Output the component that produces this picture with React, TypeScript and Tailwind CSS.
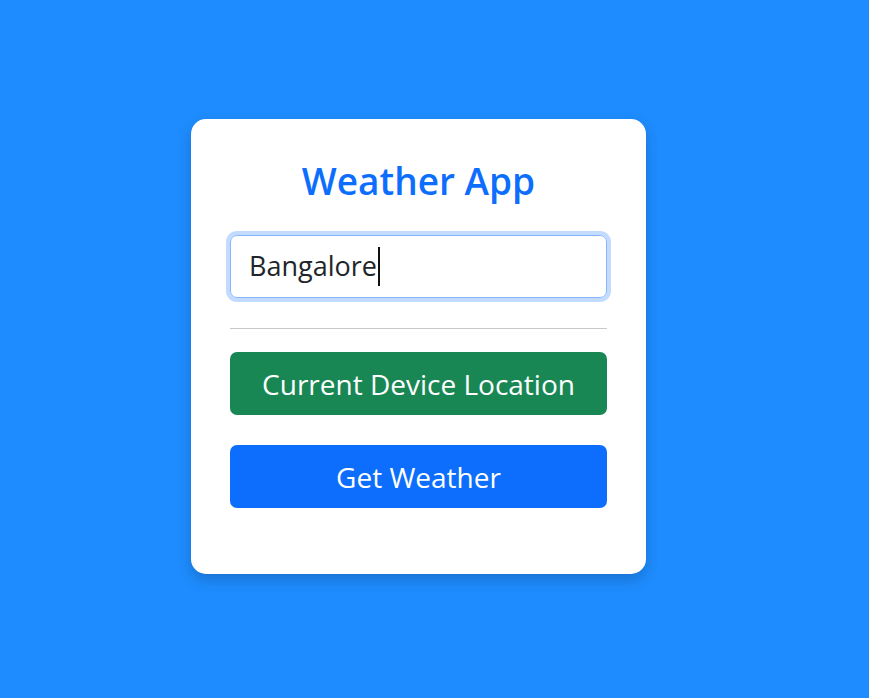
export default function App() {
  return (
    <div className="min-h-screen bg-[#1e8cfe] flex justify-center pt-[119px] pr-[32px] font-['Open_Sans',sans-serif]">
      <div className="w-[455px] h-[455px] bg-white rounded-[15px] shadow-[0_6px_14px_rgba(0,0,0,0.18)] px-[39px] pt-[40px]">
        {/* Title */}
        <h1 className="text-center text-[#0d6efd] text-[37px] font-semibold leading-[43px] mb-[33px]">
          Weather App
        </h1>

        {/* City input (focused) */}
        <div className="h-[63px] rounded-[7px] border border-[#86b7fe] ring-4 ring-[#0d6efd]/25 flex items-center px-[18px] text-[27px] text-[#212529]">
          <span>Bangalore</span>
          <span className="w-[2px] h-[39px] bg-[#111] ml-px" />
        </div>

        <hr className="mt-[30px] mb-[23px] border-t border-[#c8c8c8]" />

        <button className="w-full h-[63px] rounded-[7px] bg-[#198754] text-white text-[28px] mb-[30px]">
          Current Device Location
        </button>

        <button className="w-full h-[63px] rounded-[7px] bg-[#0d6efd] text-white text-[28px]">
          Get Weather
        </button>
      </div>
    </div>
  );
}
